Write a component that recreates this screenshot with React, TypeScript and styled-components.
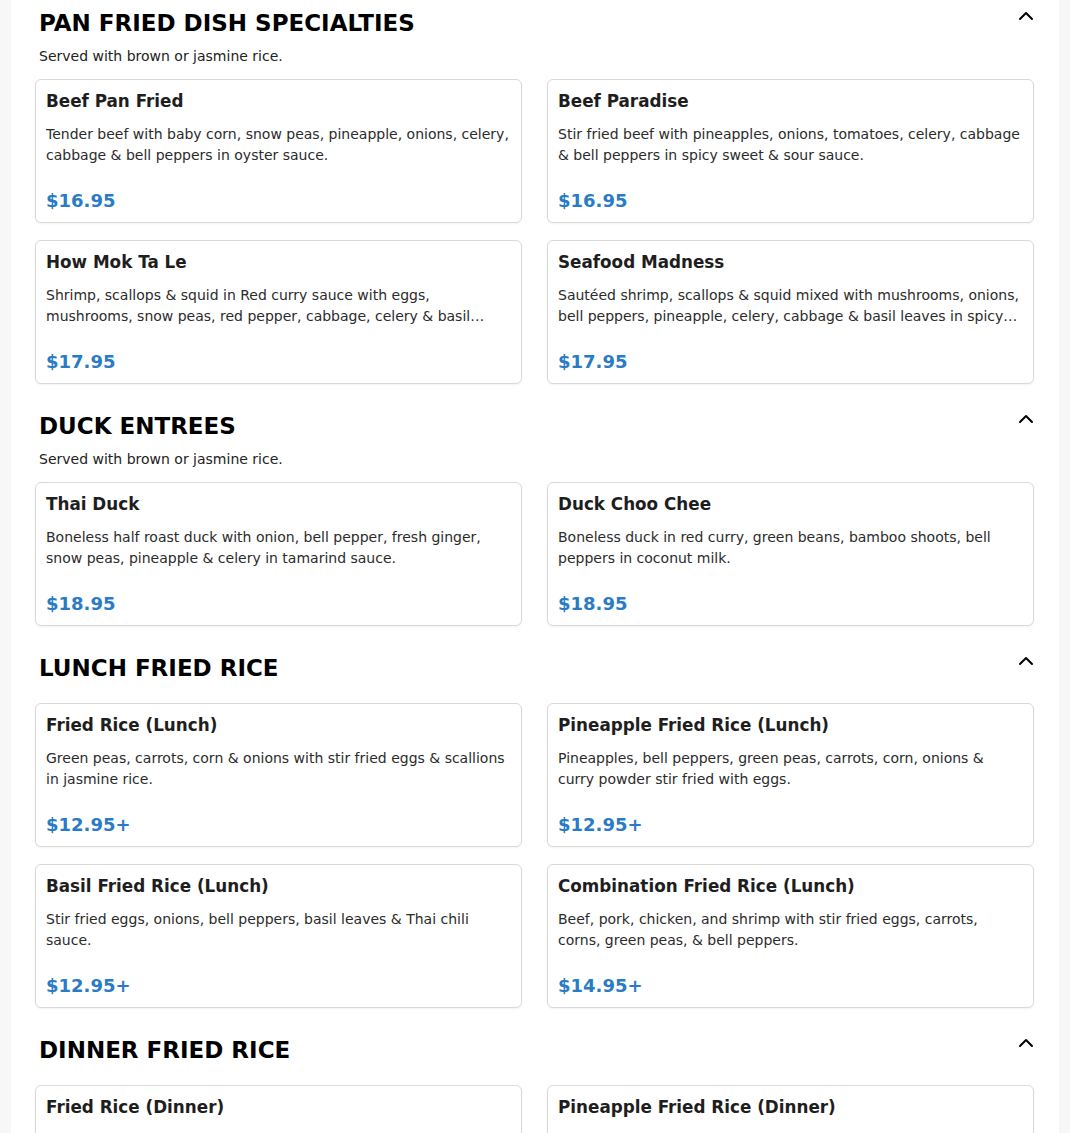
import React from "react";
import styled, { createGlobalStyle } from "styled-components";
import { ChevronUp } from "lucide-react";

const Global = createGlobalStyle`
  html, body { margin: 0; padding: 0; background: #f7f7f7; }
  body { font-family: "DejaVu Sans", Verdana, sans-serif; }
  * { box-sizing: border-box; }
`;

type Item = { name: string; desc: string; price: string };
type Section = { title: string; sub?: string; items: Item[] };

const sections: Section[] = [
  {
    title: "PAN FRIED DISH SPECIALTIES",
    sub: "Served with brown or jasmine rice.",
    items: [
      { name: "Beef Pan Fried", desc: "Tender beef with baby corn, snow peas, pineapple, onions, celery, cabbage & bell peppers in oyster sauce.", price: "$16.95" },
      { name: "Beef Paradise", desc: "Stir fried beef with pineapples, onions, tomatoes, celery, cabbage & bell peppers in spicy sweet & sour sauce.", price: "$16.95" },
      { name: "How Mok Ta Le", desc: "Shrimp, scallops & squid in Red curry sauce with eggs, mushrooms, snow peas, red pepper, cabbage, celery & basil leaves steamed in banana leaf.", price: "$17.95" },
      { name: "Seafood Madness", desc: "Sautéed shrimp, scallops & squid mixed with mushrooms, onions, bell peppers, pineapple, celery, cabbage & basil leaves in spicy chili sauce.", price: "$17.95" },
    ],
  },
  {
    title: "DUCK ENTREES",
    sub: "Served with brown or jasmine rice.",
    items: [
      { name: "Thai Duck", desc: "Boneless half roast duck with onion, bell pepper, fresh ginger, snow peas, pineapple & celery in tamarind sauce.", price: "$18.95" },
      { name: "Duck Choo Chee", desc: "Boneless duck in red curry, green beans, bamboo shoots, bell peppers in coconut milk.", price: "$18.95" },
    ],
  },
  {
    title: "LUNCH FRIED RICE",
    items: [
      { name: "Fried Rice (Lunch)", desc: "Green peas, carrots, corn & onions with stir fried eggs & scallions in jasmine rice.", price: "$12.95+" },
      { name: "Pineapple Fried Rice (Lunch)", desc: "Pineapples, bell peppers, green peas, carrots, corn, onions & curry powder stir fried with eggs.", price: "$12.95+" },
      { name: "Basil Fried Rice (Lunch)", desc: "Stir fried eggs, onions, bell peppers, basil leaves & Thai chili sauce.", price: "$12.95+" },
      { name: "Combination Fried Rice (Lunch)", desc: "Beef, pork, chicken, and shrimp with stir fried eggs, carrots, corns, green peas, & bell peppers.", price: "$14.95+" },
    ],
  },
  {
    title: "DINNER FRIED RICE",
    items: [
      { name: "Fried Rice (Dinner)", desc: "Green peas, carrots, corn & onions with stir fried eggs & scallions in jasmine rice.", price: "$14.95+" },
      { name: "Pineapple Fried Rice (Dinner)", desc: "Pineapples, bell peppers, green peas, carrots, corn, onions & curry powder stir fried with eggs.", price: "$14.95+" },
    ],
  },
];

const Page = styled.main`
  margin: 0 11px;
  background: #ffffff;
  padding: 5px 25px 24px 24px;
  display: flex;
  flex-direction: column;
  gap: 24px;
`;

const SectionBox = styled.section`
  display: flex;
  flex-direction: column;
`;

const HeaderRow = styled.div`
  display: flex;
  justify-content: space-between;
  align-items: flex-start;
  padding: 0 0 0 4px;
`;

const HeaderText = styled.div`
  display: flex;
  flex-direction: column;
`;

const Title = styled.h2`
  margin: 0;
  font-family: "DejaVu Sans", sans-serif;
  font-size: 23px;
  line-height: 36px;
  font-weight: 700;
  color: #000;
`;

const Sub = styled.p`
  margin: 5px 0 0;
  font-size: 14px;
  line-height: 21px;
  color: #222;
`;

const Toggle = styled.button`
  border: none;
  background: transparent;
  padding: 0;
  width: 24px;
  height: 24px;
  margin-top: -1px;
  display: flex;
  align-items: center;
  justify-content: center;
  color: #000;
  margin-right: -4px;
  cursor: pointer;
`;

const Grid = styled.div<{ $hasSub: boolean }>`
  display: grid;
  grid-template-columns: 1fr 1fr;
  column-gap: 25px;
  row-gap: 17px;
  margin-top: ${(p) => (p.$hasSub ? "12px" : "17px")};
`;

const Card = styled.article`
  border: 1px solid #d9d9d9;
  border-radius: 6px;
  background: #fff;
  box-shadow: 0 1px 2px rgba(0, 0, 0, 0.05);
  padding: 11px 10px 10px;
  display: flex;
  flex-direction: column;
  height: 144px;
`;

const Name = styled.h3`
  margin: 0;
  font-size: 16.8px;
  line-height: 20px;
  font-weight: 700;
  color: #1e1e1e;
`;

const Desc = styled.p`
  margin: 13px 0 0;
  font-size: 14px;
  line-height: 21px;
  color: #2b2b2b;
  display: -webkit-box;
  -webkit-line-clamp: 2;
  -webkit-box-orient: vertical;
  overflow: hidden;
`;

const Price = styled.div`
  margin-top: auto;
  font-size: 18px;
  line-height: 22px;
  font-weight: 700;
  color: #2a7bc6;
`;

export default function App() {
  return (
    <>
      <Global />
      <Page>
        {sections.map((s) => (
          <SectionBox key={s.title}>
            <HeaderRow>
              <HeaderText>
                <Title>{s.title}</Title>
                {s.sub && <Sub>{s.sub}</Sub>}
              </HeaderText>
              <Toggle aria-label="Collapse section">
                <ChevronUp size={24} strokeWidth={2} />
              </Toggle>
            </HeaderRow>
            <Grid $hasSub={!!s.sub}>
              {s.items.map((it) => (
                <Card key={it.name}>
                  <Name>{it.name}</Name>
                  <Desc>{it.desc}</Desc>
                  <Price>{it.price}</Price>
                </Card>
              ))}
            </Grid>
          </SectionBox>
        ))}
      </Page>
    </>
  );
}
